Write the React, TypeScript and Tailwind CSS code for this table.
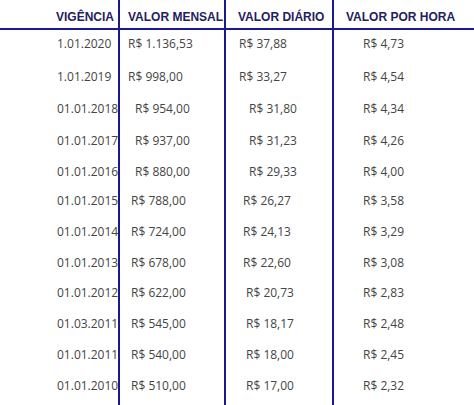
import React from 'react';

type Row = {
  date: string;
  mensal: string;
  diario: string;
  hora: string;
  padM: string;
  padD: string;
  h: string;
};

const rows: Row[] = [
  { date: '1.01.2020', mensal: 'R$ 1.136,53', diario: 'R$ 37,88', hora: 'R$ 4,73', padM: 'pl-[8px]', padD: 'pl-[13px]', h: 'h-[33px]' },
  { date: '1.01.2019', mensal: 'R$ 998,00', diario: 'R$ 33,27', hora: 'R$ 4,54', padM: 'pl-[8px]', padD: 'pl-[13px]', h: 'h-[32px]' },
  { date: '01.01.2018', mensal: 'R$ 954,00', diario: 'R$ 31,80', hora: 'R$ 4,34', padM: 'pl-[15px]', padD: 'pl-[23px]', h: 'h-[32px]' },
  { date: '01.01.2017', mensal: 'R$ 937,00', diario: 'R$ 31,23', hora: 'R$ 4,26', padM: 'pl-[15px]', padD: 'pl-[23px]', h: 'h-[31px]' },
  { date: '01.01.2016', mensal: 'R$ 880,00', diario: 'R$ 29,33', hora: 'R$ 4,00', padM: 'pl-[15px]', padD: 'pl-[23px]', h: 'h-[29px]' },
  { date: '01.01.2015', mensal: 'R$ 788,00', diario: 'R$ 26,27', hora: 'R$ 3,58', padM: 'pl-[11px]', padD: 'pl-[17px]', h: 'h-[31px]' },
  { date: '01.01.2014', mensal: 'R$ 724,00', diario: 'R$ 24,13', hora: 'R$ 3,29', padM: 'pl-[11px]', padD: 'pl-[17px]', h: 'h-[31px]' },
  { date: '01.01.2013', mensal: 'R$ 678,00', diario: 'R$ 22,60', hora: 'R$ 3,08', padM: 'pl-[11px]', padD: 'pl-[17px]', h: 'h-[30px]' },
  { date: '01.01.2012', mensal: 'R$ 622,00', diario: 'R$ 20,73', hora: 'R$ 2,83', padM: 'pl-[11px]', padD: 'pl-[20px]', h: 'h-[31px]' },
  { date: '01.03.2011', mensal: 'R$ 545,00', diario: 'R$ 18,17', hora: 'R$ 2,48', padM: 'pl-[11px]', padD: 'pl-[20px]', h: 'h-[31px]' },
  { date: '01.01.2011', mensal: 'R$ 540,00', diario: 'R$ 18,00', hora: 'R$ 2,45', padM: 'pl-[11px]', padD: 'pl-[20px]', h: 'h-[31px]' },
  { date: '01.01.2010', mensal: 'R$ 510,00', diario: 'R$ 17,00', hora: 'R$ 2,32', padM: 'pl-[11px]', padD: 'pl-[20px]', h: 'h-[33px]' },
];

const head = "h-[30px] border-b-2 border-[#1a1a8e] pt-[11px] leading-none font-bold text-[12px] text-[#1f2160] whitespace-nowrap font-['Liberation_Sans',Arial,sans-serif]";
const cell = "pt-[8px] leading-none text-[12px] text-[#444444] whitespace-nowrap font-['Open_Sans',sans-serif]";

const App: React.FC = () => {
  return (
    <div className="w-[474px] h-[405px] overflow-hidden bg-white">
      <div className="grid grid-cols-[120px_106px_108px_140px]">
        {/* header */}
        <div className={`${head} border-r-2 pl-[56px]`}>VIGÊNCIA</div>
        <div className={`${head} border-r-2 pl-[8px]`}>VALOR MENSAL</div>
        <div className={`${head} border-r-2 pl-[12px]`}>VALOR DIÁRIO</div>
        <div className={`${head} pl-[12px]`}>VALOR POR HORA</div>

        {rows.map((r) => (
          <React.Fragment key={r.date + r.mensal}>
            <div className={`${cell} ${r.h} border-r-2 border-[#1a1a8e] pl-[57px]`}>{r.date}</div>
            <div className={`${cell} ${r.h} border-r-2 border-[#1a1a8e] ${r.padM}`}>{r.mensal}</div>
            <div className={`${cell} ${r.h} border-r-2 border-[#1a1a8e] ${r.padD}`}>{r.diario}</div>
            <div className={`${cell} ${r.h} pl-[29px]`}>{r.hora}</div>
          </React.Fragment>
        ))}
      </div>
    </div>
  );
};

export default App;
